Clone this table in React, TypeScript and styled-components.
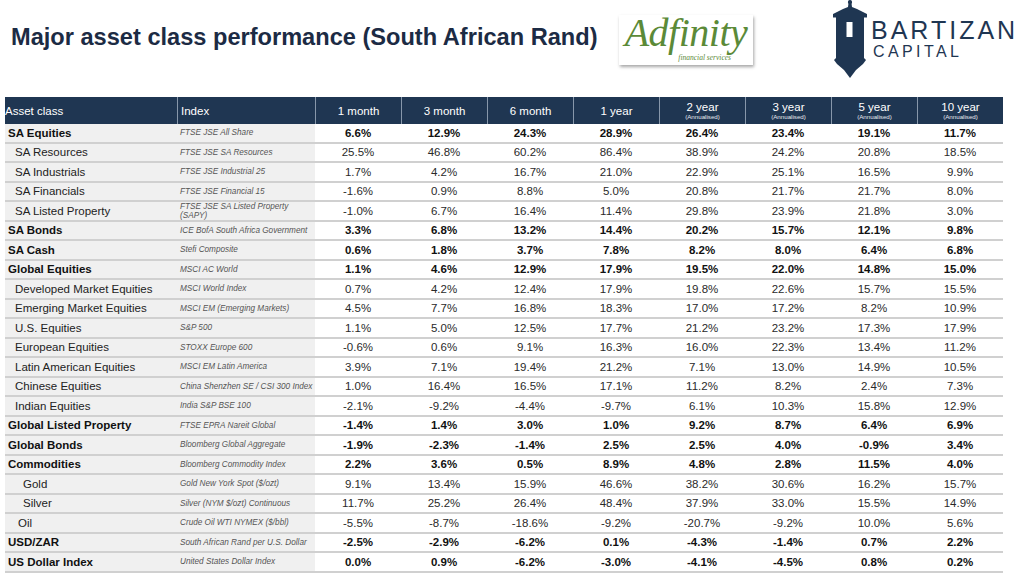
import React from "react";
import styled, { createGlobalStyle } from "styled-components";

const GlobalStyle = createGlobalStyle`
  html, body { margin: 0; padding: 0; background: #ffffff; }
  body { font-family: "Liberation Sans", Arial, sans-serif; }
`;

const Page = styled.div`
  width: 1024px;
  height: 580px;
  overflow: hidden;
  background: #ffffff;
`;

const TopBar = styled.div`
  display: flex;
  height: 97px;
  align-items: flex-start;
`;

const Title = styled.h1`
  flex: none;
  width: 619px;
  box-sizing: border-box;
  margin: 23px 0 0 0;
  padding-left: 11px;
  font-size: 23.6px;
  font-weight: bold;
  color: #1c2b44;
  line-height: 28px;
  white-space: nowrap;
`;

const AdfinityBox = styled.div`
  flex: none;
  width: 134px;
  height: 50px;
  margin-top: 15px;
  background: #ffffff;
  box-shadow: 1px 2px 3px rgba(0, 0, 0, 0.35);
  display: flex;
  flex-direction: column;
  align-items: center;
`;

const AdfinityWord = styled.div`
  font-family: "Liberation Serif", "Times New Roman", serif;
  font-style: italic;
  font-size: 40px;
  line-height: 34px;
  color: #5b8a38;
  margin-top: 1px;
  letter-spacing: -0.5px;
`;

const AdfinitySub = styled.div`
  font-family: "Liberation Serif", "Times New Roman", serif;
  font-style: italic;
  font-size: 7.5px;
  line-height: 8px;
  color: #5b8a38;
  align-self: flex-end;
  margin-right: 22px;
  margin-top: 4px;
`;

const Bartizan = styled.div`
  flex: none;
  display: flex;
  margin-left: 80px;
  align-items: flex-start;
`;

const BartizanText = styled.div`
  display: flex;
  flex-direction: column;
  margin-left: 4px;
  margin-top: 16px;
  color: #1f3652;
`;

const BartizanName = styled.div`
  font-family: "Liberation Sans", Arial, sans-serif;
  font-size: 25px;
  line-height: 28px;
  letter-spacing: 3px;
`;

const BartizanSub = styled.div`
  font-family: "Liberation Sans", Arial, sans-serif;
  font-size: 16px;
  line-height: 16px;
  letter-spacing: 3.4px;
  margin-left: 2px;
`;

const Table = styled.div`
  margin-left: 5px;
  width: 998px;
  display: flex;
  flex-direction: column;
`;

const Cols = `
  display: grid;
  grid-template-columns: 172px 138px repeat(8, 86px);
`;

const HeaderRow = styled.div`
  ${Cols}
  height: 27px;
  background: #1f3652;
  color: #ffffff;
`;

const HeadCell = styled.div<{ $left?: boolean; $pad?: number }>`
  display: flex;
  flex-direction: column;
  justify-content: center;
  align-items: ${(p) => (p.$left ? "flex-start" : "center")};
  padding-left: ${(p) => p.$pad ?? 0}px;
  font-size: 11.5px;
  line-height: 12px;
  border-left: ${(p) => (p.$pad === 0 && p.$left ? "none" : "1px solid #8797aa")};
`;

const HeadSub = styled.span`
  font-size: 6.2px;
  line-height: 8px;
  color: #e6e9ee;
`;

const BodyRow = styled.div`
  ${Cols}
  height: 19.5px;
`;

const Cell = styled.div`
  display: flex;
  align-items: center;
  box-sizing: border-box;
  border-bottom: 2px solid #d0d0d0;
  white-space: nowrap;
`;

const NameCell = styled(Cell)<{ $indent: number; $bold: boolean }>`
  background: #f0f0f0;
  padding-left: ${(p) => p.$indent}px;
  font-size: 11.5px;
  font-weight: ${(p) => (p.$bold ? "bold" : "normal")};
  color: ${(p) => (p.$bold ? "#111111" : "#222222")};
`;

const IndexCell = styled(Cell)`
  background: #f0f0f0;
  padding-left: 3px;
  font-size: 8.2px;
  line-height: 9px;
  font-style: italic;
  color: #555555;
`;

const ValueCell = styled(Cell)<{ $bold: boolean }>`
  justify-content: center;
  background: #ffffff;
  font-size: 11.5px;
  font-weight: ${(p) => (p.$bold ? "bold" : "normal")};
  color: ${(p) => (p.$bold ? "#111111" : "#2a2a2a")};
`;

const heads: { label: string; sub?: boolean }[] = [
  { label: "1 month" },
  { label: "3 month" },
  { label: "6 month" },
  { label: "1 year" },
  { label: "2 year", sub: true },
  { label: "3 year", sub: true },
  { label: "5 year", sub: true },
  { label: "10 year", sub: true },
];

type Row = { name: string; index: React.ReactNode; bold?: boolean; indent?: number; v: string };

const rows: Row[] = [
  { name: "SA Equities", bold: true, index: "FTSE JSE All Share", v: "6.6% 12.9% 24.3% 28.9% 26.4% 23.4% 19.1% 11.7%" },
  { name: "SA Resources", index: "FTSE JSE SA Resources", v: "25.5% 46.8% 60.2% 86.4% 38.9% 24.2% 20.8% 18.5%" },
  { name: "SA Industrials", index: "FTSE JSE Industrial 25", v: "1.7% 4.2% 16.7% 21.0% 22.9% 25.1% 16.5% 9.9%" },
  { name: "SA Financials", index: "FTSE JSE Financial 15", v: "-1.6% 0.9% 8.8% 5.0% 20.8% 21.7% 21.7% 8.0%" },
  {
    name: "SA Listed Property",
    index: (
      <span>
        FTSE JSE SA Listed Property
        <br />
        (SAPY)
      </span>
    ),
    v: "-1.0% 6.7% 16.4% 11.4% 29.8% 23.9% 21.8% 3.0%",
  },
  { name: "SA Bonds", bold: true, index: "ICE BofA South Africa Government", v: "3.3% 6.8% 13.2% 14.4% 20.2% 15.7% 12.1% 9.8%" },
  { name: "SA Cash", bold: true, index: "Stefi Composite", v: "0.6% 1.8% 3.7% 7.8% 8.2% 8.0% 6.4% 6.8%" },
  { name: "Global Equities", bold: true, index: "MSCI AC World", v: "1.1% 4.6% 12.9% 17.9% 19.5% 22.0% 14.8% 15.0%" },
  { name: "Developed Market Equities", index: "MSCI World Index", v: "0.7% 4.2% 12.4% 17.9% 19.8% 22.6% 15.7% 15.5%" },
  { name: "Emerging Market Equities", index: "MSCI EM (Emerging Markets)", v: "4.5% 7.7% 16.8% 18.3% 17.0% 17.2% 8.2% 10.9%" },
  { name: "U.S. Equities", index: "S&P 500", v: "1.1% 5.0% 12.5% 17.7% 21.2% 23.2% 17.3% 17.9%" },
  { name: "European Equities", index: "STOXX Europe 600", v: "-0.6% 0.6% 9.1% 16.3% 16.0% 22.3% 13.4% 11.2%" },
  { name: "Latin American Equities", index: "MSCI EM Latin America", v: "3.9% 7.1% 19.4% 21.2% 7.1% 13.0% 14.9% 10.5%" },
  { name: "Chinese Equities", index: "China Shenzhen SE / CSI 300 Index", v: "1.0% 16.4% 16.5% 17.1% 11.2% 8.2% 2.4% 7.3%" },
  { name: "Indian Equities", index: "India S&P BSE 100", v: "-2.1% -9.2% -4.4% -9.7% 6.1% 10.3% 15.8% 12.9%" },
  { name: "Global Listed Property", bold: true, index: "FTSE EPRA Nareit Global", v: "-1.4% 1.4% 3.0% 1.0% 9.2% 8.7% 6.4% 6.9%" },
  { name: "Global Bonds", bold: true, index: "Bloomberg Global Aggregate", v: "-1.9% -2.3% -1.4% 2.5% 2.5% 4.0% -0.9% 3.4%" },
  { name: "Commodities", bold: true, index: "Bloomberg Commodity Index", v: "2.2% 3.6% 0.5% 8.9% 4.8% 2.8% 11.5% 4.0%" },
  { name: "Gold", indent: 18, index: "Gold New York Spot ($/ozt)", v: "9.1% 13.4% 15.9% 46.6% 38.2% 30.6% 16.2% 15.7%" },
  { name: "Silver", indent: 18, index: "Silver (NYM $/ozt) Continuous", v: "11.7% 25.2% 26.4% 48.4% 37.9% 33.0% 15.5% 14.9%" },
  { name: "Oil", indent: 13, index: "Crude Oil WTI NYMEX ($/bbl)", v: "-5.5% -8.7% -18.6% -9.2% -20.7% -9.2% 10.0% 5.6%" },
  { name: "USD/ZAR", bold: true, index: "South African Rand per U.S. Dollar", v: "-2.5% -2.9% -6.2% 0.1% -4.3% -1.4% 0.7% 2.2%" },
  { name: "US Dollar Index", bold: true, index: "United States Dollar Index", v: "0.0% 0.9% -6.2% -3.0% -4.1% -4.5% 0.8% 0.2%" },
];

const TowerIcon = () => (
  <svg width="34" height="78" viewBox="0 0 34 78">
    <path
      fill="#1f3652"
      d="M17 0 C19 0 19.6 2.2 18.6 4 L19 7 L24 9 L27 10.5 L34 14 L34 17.5 L31 17.5 L31 58 L33 60 L30 64 L23 70 L17 78 L11 70 L4 64 L1 60 L3 58 L3 17.5 L0 17.5 L0 14 L7 10.5 L10 9 L15 7 L15.4 4 C14.4 2.2 15 0 17 0 Z"
    />
    <rect x="13.5" y="22" width="6" height="15" fill="#ffffff" />
  </svg>
);

export default function App() {
  return (
    <Page>
      <GlobalStyle />
      <TopBar>
        <Title>Major asset class performance (South African Rand)</Title>
        <AdfinityBox>
          <AdfinityWord>Adfinity</AdfinityWord>
          <AdfinitySub>financial services</AdfinitySub>
        </AdfinityBox>
        <Bartizan>
          <TowerIcon />
          <BartizanText>
            <BartizanName>BARTIZAN</BartizanName>
            <BartizanSub>CAPITAL</BartizanSub>
          </BartizanText>
        </Bartizan>
      </TopBar>
      <Table>
        <HeaderRow>
          <HeadCell $left $pad={0}>Asset class</HeadCell>
          <HeadCell $left $pad={3}>Index</HeadCell>
          {heads.map((h) => (
            <HeadCell key={h.label}>
              <span>{h.label}</span>
              {h.sub && <HeadSub>(Annualised)</HeadSub>}
            </HeadCell>
          ))}
        </HeaderRow>
        {rows.map((r) => (
          <BodyRow key={r.name}>
            <NameCell $bold={!!r.bold} $indent={r.indent ?? (r.bold ? 3 : 10)}>
              {r.name}
            </NameCell>
            <IndexCell>{r.index}</IndexCell>
            {r.v.split(" ").map((val, i) => (
              <ValueCell key={i} $bold={!!r.bold}>
                {val}
              </ValueCell>
            ))}
          </BodyRow>
        ))}
      </Table>
    </Page>
  );
}
